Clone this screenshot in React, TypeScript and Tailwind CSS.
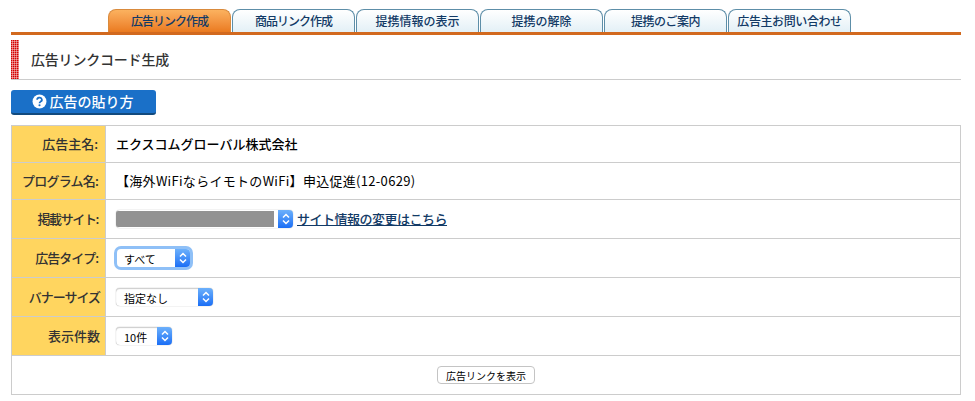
const tabs = [
  { label: "広告リンク作成", tracking: "tracking-[-1px]" },
  { label: "商品リンク作成", tracking: "tracking-[-1px]" },
  { label: "提携情報の表示", tracking: "tracking-normal" },
  { label: "提携の解除", tracking: "tracking-normal" },
  { label: "提携のご案内", tracking: "tracking-[-0.5px]" },
  { label: "広告主お問い合わせ", tracking: "tracking-[-0.4px]" },
];

function Chevrons() {
  return (
    <svg width="8" height="12" viewBox="0 0 8 12" fill="none" stroke="white" strokeWidth="1.5">
      <path d="M1 4.5 L4 1.5 L7 4.5" />
      <path d="M1 7.5 L4 10.5 L7 7.5" />
    </svg>
  );
}

function FakeSelect({ label, width, focused }: { label?: string; width: string; focused?: boolean }) {
  return (
    <div className={`flex h-[18px] items-stretch rounded-[4px] bg-white ${width} ${focused ? "ml-[1px] shadow-[0_0_0_3px_#8fc0f7]" : "shadow-[inset_0_1px_1px_#ccc,0_0_1px_#888]"}`}>
      <div className={`flex flex-1 items-center overflow-hidden pt-[2px] text-[11px] leading-none text-black ${focused ? "pl-[7px]" : "pl-2"}`}>{label}</div>
      <div className="flex w-[15px] items-center justify-center rounded-r-[4px] bg-gradient-to-b from-[#6cb0fb] to-[#1a6ef5]">
        <Chevrons />
      </div>
    </div>
  );
}

function Row({ label, h, labelClass, children }: { label: string; h: string; labelClass?: string; children: React.ReactNode }) {
  return (
    <div className={`flex border-b border-[#cccccc] ${h}`}>
      <div className={`flex w-[94px] items-center justify-end border-r border-[#cccccc] bg-[#ffd55f] text-[13px] font-medium text-[#333333] ${labelClass ?? "pr-[5px]"}`}>{label}</div>
      <div className="flex flex-1 items-center gap-[4px] pl-[10px]">{children}</div>
    </div>
  );
}

export default function App() {
  return (
    <div className="h-[401px] w-[975px] overflow-hidden bg-white pl-[11px] pr-[14px] pt-[9px] font-['Noto_Sans_CJK_JP',sans-serif]">
      {/* Tabs */}
      <div className="flex h-[23px] gap-[1px] pl-[97px]">
        {tabs.map((t, i) => (
          <div
            key={t.label}
            className={`flex w-[123px] items-center justify-center rounded-t-[8px] border border-b-0 text-[12px] font-medium ${t.tracking} ${
              i === 0
                ? "border-[#d98a3c] bg-gradient-to-b from-[#fbb25f] to-[#ea7a1e] text-[#123a66]"
                : "border-[#5d8ea8] bg-gradient-to-b from-white to-[#e3f0f6] text-[#123a66]"
            }`}
          >
            {t.label}
          </div>
        ))}
      </div>
      <div className="h-[3px] bg-[#d2691e]" />

      {/* Title */}
      <div className="mt-[5px] flex h-[40px] items-center border-b border-[#cccccc]">
        <div className="h-[39px] w-[8px] bg-[#d40000] bg-[linear-gradient(to_right,transparent_1px,#ffffff66_1px,#ffffff66_2px,transparent_2px),linear-gradient(to_bottom,transparent_1px,#ffffff66_1px,#ffffff66_2px,transparent_2px)] bg-[length:2px_2px]" />
        <h1 className="ml-[12px] text-[14px] font-medium tracking-[-0.2px] text-[#333333]">広告リンクコード生成</h1>
      </div>

      {/* Help button */}
      <div className="mt-[10px] flex h-[25px] w-[145px] items-center justify-center gap-[3px] rounded-[3px] border-b-2 border-[#124a7d] bg-[#1a70c8] pr-[2px] text-[14px] font-medium text-white">
        <svg width="15" height="15" viewBox="0 0 14 14">
          <circle cx="7" cy="7" r="6.5" fill="white" />
          <path d="M4.8 5.4a2.2 2 0 1 1 3.3 1.7c-.8.5-1.1.8-1.1 1.5" fill="none" stroke="#1a70c8" strokeWidth="1.6" />
          <circle cx="7" cy="10.5" r="1" fill="#1a70c8" />
        </svg>
        広告の貼り方
      </div>

      {/* Form table */}
      <div className="mt-[10px] border border-[#cccccc]">
        <Row label="広告主名:" h="h-[37px]" labelClass="pr-[7px]">
          <span className="text-[13px] font-medium text-black">エクスコムグローバル株式会社</span>
        </Row>
        <Row label="プログラム名:" h="h-[37px]" labelClass="pr-[7px] tracking-[-0.8px]">
          <span className="text-[13px] tracking-[0.3px] text-black">【海外WiFiならイモトのWiFi】申込促進(12-0629)</span>
        </Row>
        <Row label="掲載サイト:" h="h-[39px]" labelClass="pr-[7px] tracking-[-1.4px]">
          <div className="flex h-[18px] w-[177px] items-stretch rounded-[4px] bg-white shadow-[0_0_1px_#888]">
            <div className="my-[1px] w-[158px] rounded-l-[2px] bg-[#929292]" />
            <div className="flex-1" />
            <div className="flex w-[15px] items-center justify-center rounded-r-[4px] bg-gradient-to-b from-[#6cb0fb] to-[#1a6ef5]">
              <Chevrons />
            </div>
          </div>
          <a className="text-[13px] font-medium tracking-[-0.5px] text-[#123a66] underline">サイト情報の変更はこちら</a>
        </Row>
        <Row label="広告タイプ:" h="h-[39px]" labelClass="pr-[7px] tracking-[-1px]">
          <FakeSelect label="すべて" width="w-[73px]" focused />
        </Row>
        <Row label="バナーサイズ" h="h-[39px]" labelClass="pr-[5px] tracking-[-1px]">
          <FakeSelect label="指定なし" width="w-[97px]" />
        </Row>
        <Row label="表示件数" h="h-[39px]">
          <FakeSelect label="10件" width="w-[56px]" />
        </Row>
        <div className="flex h-[38px] items-center justify-center">
          <button className="flex h-[18px] w-[98px] items-center justify-center rounded-[4px] border border-[#c4c4c4] bg-white text-[10px] text-black">
            広告リンクを表示
          </button>
        </div>
      </div>
    </div>
  );
}
